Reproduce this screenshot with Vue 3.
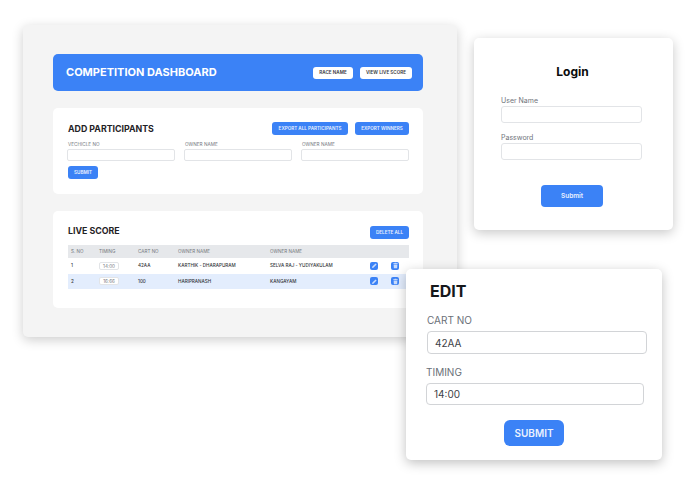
<template>
  <div class="canvas">
    <!-- dashboard window -->
    <section class="window dashboard">
      <header class="hero">
        <h1>COMPETITION DASHBOARD</h1>
        <div class="hero-actions">
          <button class="btn-white race">RACE NAME</button>
          <button class="btn-white live">VIEW LIVE SCORE</button>
        </div>
      </header>

      <div class="card participants">
        <div class="card-head">
          <h2>ADD PARTICIPANTS</h2>
          <div class="head-actions">
            <button class="btn export-all">EXPORT ALL PARTICIPANTS</button>
            <button class="btn export-win">EXPORT WINNERS</button>
          </div>
        </div>
        <div class="fields">
          <label v-for="f in fields" :key="f.id" class="field">
            <span>{{ f.label }}</span>
            <input type="text" />
          </label>
        </div>
        <button class="btn small">SUBMIT</button>
      </div>

      <div class="card score">
        <div class="card-head">
          <h2>LIVE SCORE</h2>
          <button class="btn delete">DELETE ALL</button>
        </div>
        <div class="table">
          <div class="tr th">
            <span>S. NO</span>
            <span>TIMING</span>
            <span>CART NO</span>
            <span>OWNER NAME</span>
            <span>OWNER NAME</span>
          </div>
          <div v-for="row in rows" :key="row.no" class="tr" :class="{ alt: row.alt }">
            <span>{{ row.no }}</span>
            <span><i class="time">{{ row.time }}</i></span>
            <span>{{ row.cart }}</span>
            <span>{{ row.owner }}</span>
            <span>{{ row.place }}</span>
            <span class="icon-btn">
              <svg viewBox="0 0 10 10" width="7" height="7"><path d="M1.500 8.500l.4-1.900L6.500 2l1.500 1.500-4.600 4.600z" fill="#c9dcfc" /></svg>
            </span>
            <span class="icon-btn">
              <svg viewBox="0 0 10 10" width="7" height="7"><path d="M3.800 1.200h2.400l.4.7h1.600v.9H1.800v-.9h1.600zM2.300 3.400h5.400L7.300 8.800H2.700z" fill="#c9dcfc" /></svg>
            </span>
          </div>
        </div>
      </div>
    </section>

    <!-- login window -->
    <section class="window login">
      <h2>Login</h2>
      <label class="login-field">
        <span>User Name</span>
        <input type="text" />
      </label>
      <label class="login-field">
        <span>Password</span>
        <input type="password" />
      </label>
      <button class="btn login-btn">Submit</button>
    </section>

    <!-- edit window -->
    <section class="window edit">
      <h2>EDIT</h2>
      <label class="edit-field">
        <span>CART NO</span>
        <input type="text" value="42AA" />
      </label>
      <label class="edit-field second">
        <span>TIMING</span>
        <input type="text" value="14:00" />
      </label>
      <button class="btn edit-btn">SUBMIT</button>
    </section>
  </div>
</template>

<script setup>
const fields = [
  { id: 1, label: 'VECHICLE NO' },
  { id: 2, label: 'OWNER NAME' },
  { id: 3, label: 'OWNER NAME' }
]

const rows = [
  { no: 1, time: '14:00', cart: '42AA', owner: 'KARTHIK - DHARAPURAM', place: 'SELVA RAJ - YUDIYAKULAM', alt: false },
  { no: 2, time: '16:66', cart: '100', owner: 'HARIPRANASH', place: 'KANGAYAM', alt: true }
]
</script>

<style>
html,
body {
  margin: 0;
  background: #fff;
}
</style>

<style scoped>
.canvas {
  position: relative;
  width: 690px;
  height: 487px;
  overflow: hidden;
  background: #fff;
  font-family: Inter, "Liberation Sans", sans-serif;
  color: #1c1f23;
}

h1,
h2 {
  margin: 0;
}

button {
  font-family: inherit;
  border: 0;
  padding: 0;
}

input {
  box-sizing: border-box;
  display: block;
  font-family: inherit;
  background: #fff;
  outline: none;
}

.window {
  position: absolute;
  box-sizing: border-box;
}

/* dashboard window */
.dashboard {
  left: 23px;
  top: 25px;
  width: 434px;
  height: 312px;
  padding: 29px 34px 0 30px;
  display: flex;
  flex-direction: column;
  gap: 17px;
  background: #f4f4f4;
  border-radius: 5px;
  box-shadow: 0 3px 12px rgba(0, 0, 0, 0.2);
}

.hero {
  height: 37px;
  flex: none;
  padding: 0 11px 0 13px;
  display: flex;
  align-items: center;
  justify-content: space-between;
  background: #3b82f6;
  border-radius: 5px;
}

.hero h1 {
  font-size: 11px;
  font-weight: 700;
  color: #fff;
  margin-bottom: 1px;
}

.hero-actions {
  display: flex;
  gap: 7px;
}

.btn-white {
  height: 12px;
  background: #fff;
  color: #33363a;
  font-size: 4.600px;
  font-weight: 600;
  border-radius: 3px;
}

.btn-white.race {
  width: 40px;
}

.btn-white.live {
  width: 52px;
}

.btn {
  height: 13px;
  padding: 0;
  background: #3b82f6;
  color: #eaf1fe;
  font-size: 4.600px;
  font-weight: 600;
  border-radius: 3px;
  white-space: nowrap;
}

.btn.export-all {
  width: 76px;
}

.btn.export-win {
  width: 54px;
}

.btn.delete {
  width: 39px;
}

.card {
  flex: none;
  box-sizing: border-box;
  background: #fff;
  border-radius: 5px;
  padding: 14px 14px 0;
}

.participants {
  height: 86px;
}

.score {
  height: 97px;
  padding-top: 15px;
}

.card-head {
  display: flex;
  align-items: center;
  justify-content: space-between;
  height: 13px;
}

.card-head h2 {
  font-size: 8.800px;
  font-weight: 700;
  color: #1f2226;
  margin: 0 0 1px 1px;
}

.score .card-head h2 {
  margin-bottom: 4px;
}

.head-actions {
  display: flex;
  gap: 7px;
}

.fields {
  display: grid;
  grid-template-columns: repeat(3, 108px);
  column-gap: 9px;
  margin-top: 5px;
}

.field span {
  display: block;
  height: 9px;
  line-height: 8px;
  padding-left: 1px;
  font-size: 4.700px;
  color: #74787e;
}

.field input {
  width: 100%;
  height: 12px;
  border: 1px solid #e2e4e7;
  border-radius: 2px;
}

.btn.small {
  display: block;
  width: 30px;
  margin: 5px 0 0 1px;
}

.table {
  margin: 6px 0 0 1px;
}

.tr {
  display: grid;
  grid-template-columns: 31px 39px 40px 92px 100px 21px 18px;
  align-items: center;
  height: 15.500px;
  font-size: 4.600px;
  font-weight: 500;
  color: #33363a;
}

.tr > span:first-child {
  padding-left: 3px;
}

.tr.th {
  height: 13px;
  background: #e6e8eb;
  color: #74787e;
  font-weight: 400;
}

.tr.alt {
  background: #e3edfd;
}

.time {
  display: block;
  box-sizing: border-box;
  width: 20px;
  height: 8px;
  line-height: 7px;
  text-align: center;
  font-style: normal;
  font-weight: 400;
  color: #74787e;
  background: #fff;
  border: 1px solid #e2e4e7;
  border-radius: 2px;
}

.icon-btn {
  width: 8px;
  height: 8px;
  display: flex;
  align-items: center;
  justify-content: center;
  background: #3b82f6;
  border-radius: 2px;
}

/* login window */
.login {
  left: 474px;
  top: 38px;
  width: 199px;
  height: 192px;
  padding: 26px 31px 0 27px;
  display: flex;
  flex-direction: column;
  background: #fff;
  border-radius: 5px;
  box-shadow: 0 3px 12px rgba(0, 0, 0, 0.22);
}

.login h2 {
  font-size: 12px;
  line-height: 15px;
  font-weight: 700;
  color: #0b0b0c;
  text-align: center;
  margin: 0 0 16px 2px;
}

.login-field {
  display: block;
  margin-bottom: 9px;
}

.login-field span {
  display: block;
  height: 10px;
  line-height: 11px;
  font-size: 7px;
  color: #6f747b;
  margin-bottom: 1px;
}

.login-field input {
  width: 141px;
  height: 17px;
  border: 1px solid #e2e4e7;
  border-radius: 3px;
}

.login-btn {
  align-self: flex-start;
  width: 62px;
  height: 22px;
  margin: 16px 0 0 40px;
  font-size: 6.500px;
  border-radius: 4px;
}

/* edit window */
.edit {
  left: 406px;
  top: 269px;
  width: 256px;
  height: 191px;
  padding: 13px 0 0 21px;
  display: flex;
  flex-direction: column;
  background: #fff;
  border-radius: 5px;
  box-shadow: 0 3px 12px rgba(0, 0, 0, 0.25);
}

.edit h2 {
  font-size: 16px;
  line-height: 19px;
  font-weight: 700;
  color: #16181b;
  margin: 0 0 13px 3px;
}

.edit-field span {
  display: block;
  height: 12px;
  line-height: 13px;
  font-size: 10px;
  color: #6a7078;
  margin-bottom: 5px;
}

.edit-field input {
  width: 220px;
  height: 23px;
  padding: 0 7px;
  font-size: 10px;
  color: #3d3f46;
  border: 1.500px solid #d2d4d7;
  border-radius: 4px;
}

.edit-field.second {
  margin: 12px 0 0 -1px;
}

.edit-field.second input {
  width: 218px;
  height: 22px;
}

.edit-btn {
  align-self: flex-start;
  width: 60px;
  height: 26px;
  margin: 15px 0 0 77px;
  font-size: 10px;
  border-radius: 6px;
}
</style>
